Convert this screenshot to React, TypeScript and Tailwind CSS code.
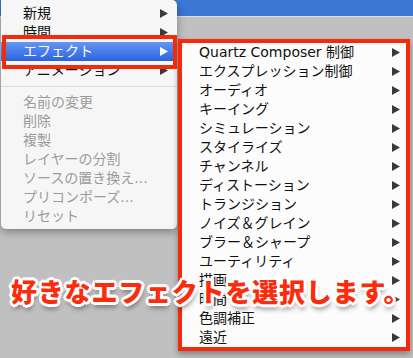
const menuFont = '"DejaVu Sans", "Noto Sans CJK JP", sans-serif'

const mainTop = [
    {label: "新規"},
    {label: "時間"},
    {label: "エフェクト", active: true},
    {label: "アニメーション"},
]

const mainBottom = [
    "名前の変更",
    "削除",
    "複製",
    "レイヤーの分割",
    "ソースの置き換え...",
    "プリコンポーズ...",
    "リセット",
]

const effects = [
    "Quartz Composer 制御",
    "エクスプレッション制御",
    "オーディオ",
    "キーイング",
    "シミュレーション",
    "スタイライズ",
    "チャンネル",
    "ディストーション",
    "トランジション",
    "ノイズ＆グレイン",
    "ブラー＆シャープ",
    "ユーティリティ",
    "描画",
    "時間",
    "色調補正",
    "遠近",
]

function Arrow({white}: { white?: boolean }) {
    return (
        <svg width="8" height="9" viewBox="0 0 8 9" className={white ? "fill-white" : "fill-[#3a3a3a]"}>
            <polygon points="0,0 8,4.5 0,9"/>
        </svg>
    )
}

export default function App() {
    return (
        <div className="relative h-[358px] w-[413px] overflow-hidden bg-[#c0c0c0]" style={{fontFamily: menuFont}}>
            {/* window title bar behind the menus */}
            <div className="h-[17px] border-b border-[#dedede] bg-[#3b77d3]"/>

            {/* main context menu */}
            <div className="absolute left-[1px] top-0 w-[176px] rounded-b-[5px] rounded-tr-[5px] bg-[#f6f6f6] pt-[4px] pb-[3px] text-[14px] shadow-[0_3px_8px_rgba(0,0,0,0.35)]">
                {mainTop.map((item) => (
                    <div
                        key={item.label}
                        className={`flex h-[19px] items-center justify-between pl-[22px] pr-[9px] leading-[19px] ${
                            item.active
                                ? "bg-gradient-to-b from-[#6496f3] to-[#2c63df] text-white"
                                : "text-[#111]"
                        }`}
                    >
                        <span>{item.label}</span>
                        <Arrow white={item.active}/>
                    </div>
                ))}
                <div className="flex h-[13px] items-center">
                    <div className="h-px w-full bg-[#dcdcdc]"/>
                </div>
                {mainBottom.map((label) => (
                    <div key={label} className="h-[19px] pl-[22px] leading-[19px] text-[#9b9b9b]">
                        {label}
                    </div>
                ))}
            </div>

            {/* effect submenu (highlighted with red frame) */}
            <div className="absolute left-[178px] top-[39px] w-[232px] border-4 border-[#f52a0b] bg-[#fcfcfc] text-[14px] text-[#111] shadow-[0_3px_6px_rgba(0,0,0,0.35)]">
                {effects.map((label) => (
                    <div key={label} className="flex h-[19px] items-center justify-between pl-[17px] pr-[6px] leading-[19px]">
                        <span>{label}</span>
                        <Arrow/>
                    </div>
                ))}
            </div>

            {/* red frame around the active item */}
            <div className="absolute left-[2px] top-[35px] h-[34px] w-[175px] border-4 border-[#f52a0b]"/>

            {/* callout */}
            <div
                className="absolute left-[11px] top-[274px] whitespace-nowrap text-[26px] font-black leading-[34px] tracking-[0.8px] text-[#fb2b0c] [text-shadow:3px_0_0_#fff,-3px_0_0_#fff,0_3px_0_#fff,0_-3px_0_#fff,2px_2px_0_#fff,-2px_-2px_0_#fff,2px_-2px_0_#fff,-2px_2px_0_#fff,1px_5px_5px_rgba(0,0,0,0.45)]"
                style={{fontFamily: '"Noto Sans CJK JP", sans-serif'}}
            >
                好きなエフェクトを選択します。
            </div>
        </div>
    )
}
